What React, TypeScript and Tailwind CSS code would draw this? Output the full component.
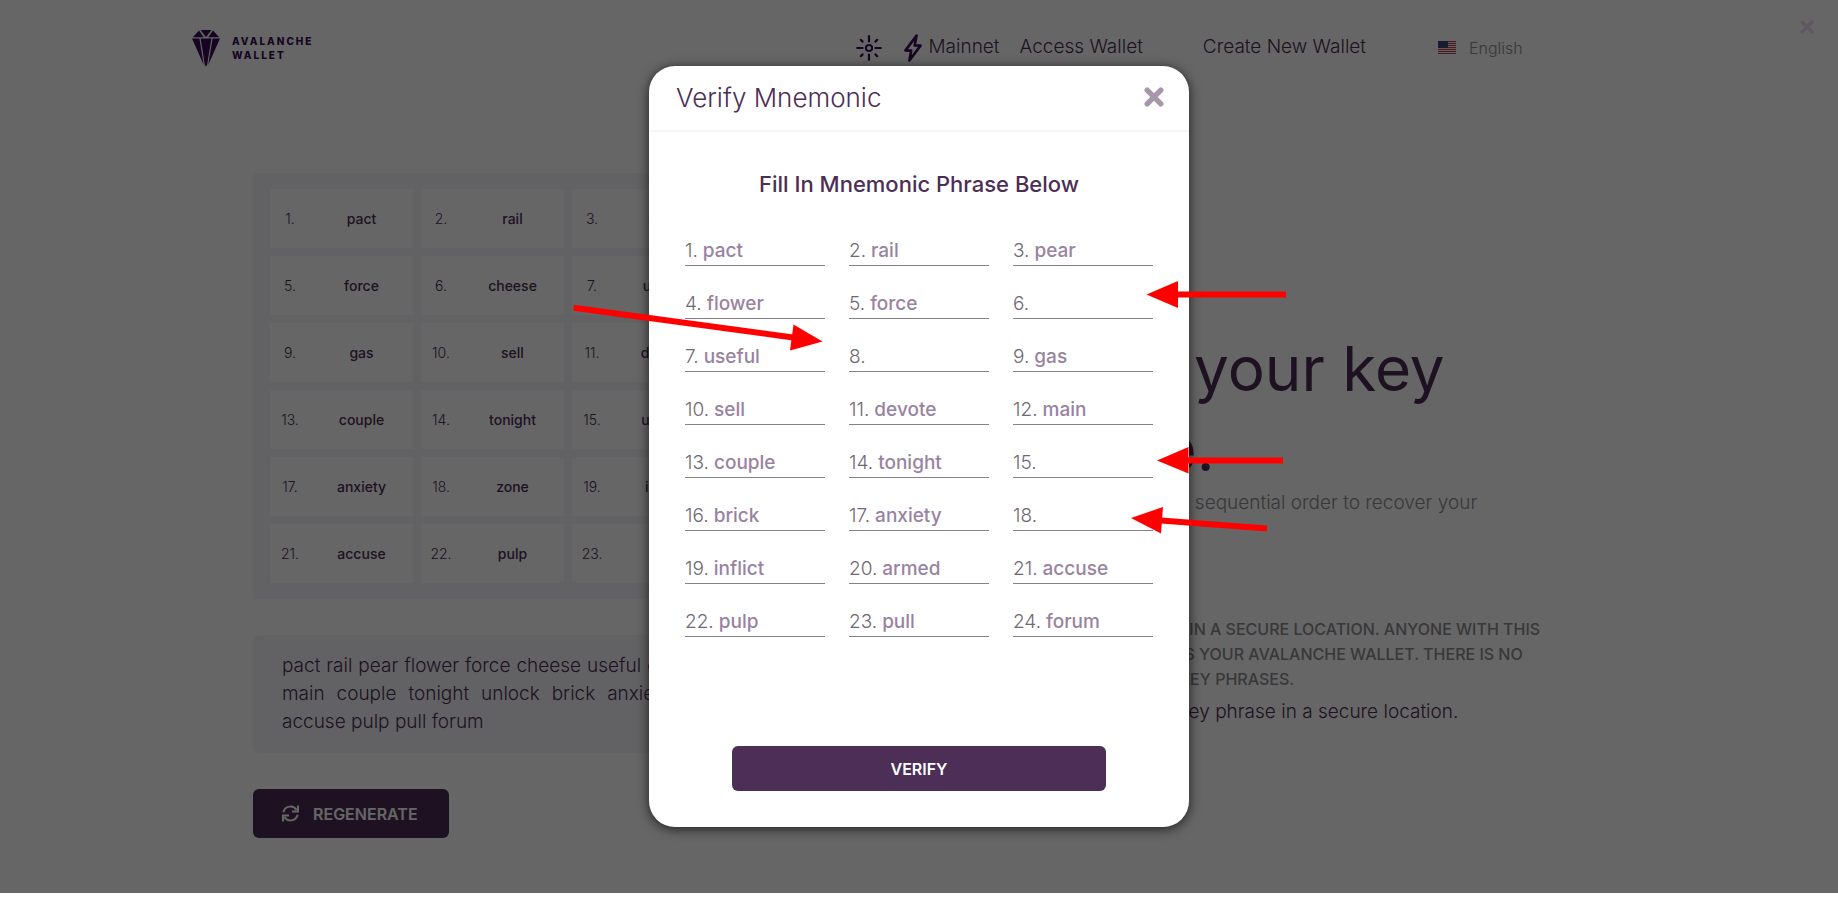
import React from "react";

const words = [
  "pact", "rail", "pear", "flower", "force", "cheese", "useful", "country",
  "gas", "sell", "devote", "main", "couple", "tonight", "unlock", "brick",
  "anxiety", "zone", "inflict", "armed", "accuse", "pulp", "pull", "forum",
];

const hidden = [6, 8, 15, 18];

function Cross({ className }: { className: string }) {
  return (
    <svg viewBox="0 0 20 20" className={className} aria-hidden="true">
      <path d="M3.2 3.2 16.8 16.8M16.8 3.2 3.2 16.8" stroke="currentColor" strokeWidth="5.4" strokeLinecap="round" />
    </svg>
  );
}

function Gem() {
  return (
    <svg viewBox="0 0 28 36" className="h-9 w-7 text-[#370b55]" fill="currentColor" aria-hidden="true">
      <path d="M7 0.6 11.8 7.2H0.8ZM8.6 0H19.4L14 7.2ZM21 0.6 27.2 7.2H16.2Z" />
      <path d="M0 8.6H7.4L11.8 35ZM8.6 8.6H19.4L15 35.5 13.9 36 13 35.5ZM20.6 8.6H28L16.2 35Z" />
    </svg>
  );
}

function Flag() {
  return (
    <svg viewBox="0 0 18 13" className="h-[13px] w-[18px]" aria-hidden="true">
      <rect width="18" height="13" fill="#eee" />
      {[0, 2, 4, 6, 8, 10, 12].map((y) => (
        <rect key={y} y={y} width="18" height="1" fill="#c8414b" />
      ))}
      <rect width="10" height="7" fill="#3c4678" />
    </svg>
  );
}

function Header() {
  return (
    <header className="mx-auto flex h-24 w-full max-w-[1454px] items-center pb-px text-[19px] font-light text-[#4c2e56]">
      <a href="#" className="flex items-center gap-3">
        <Gem />
        <span className="text-[10px] leading-[14px] font-extrabold tracking-[2px] text-[#370b55]">
          AVALANCHE
          <br />
          WALLET
        </span>
      </a>
      <nav className="ml-auto flex items-center pr-[123px]">
        <button aria-label="Toggle theme" className="mr-[22px] text-[#370b55]">
          <svg viewBox="0 0 26 26" className="size-[26px]" fill="none" stroke="currentColor" strokeWidth="2.2" strokeLinecap="round" aria-hidden="true">
            <circle cx="13" cy="13" r="3.1" strokeWidth="2" />
            <path d="M13 1.2V6.5M13 19.5V24.8M1.2 13H6.5M19.5 13H24.8M4.8 4.8 6.6 6.6M19.4 19.4 21.2 21.2M21.2 4.8 19.4 6.6M6.6 19.4 4.8 21.2" />
          </svg>
        </button>
        <button className="mr-5 flex items-center gap-[7px]">
          <svg viewBox="0 0 18 28" className="h-7 w-[18px] text-[#370b55]" fill="none" stroke="currentColor" strokeWidth="2.6" strokeLinejoin="round" aria-hidden="true">
            <path d="M12.6 1.5 1.5 16.4 7.2 16.6 5.4 26.5 16.5 11.6 10.6 11.4Z" />
          </svg>
          Mainnet
        </button>
        <a href="#access" className="mr-[60px]">Access Wallet</a>
        <a href="#create" className="mr-[72px]">Create New Wallet</a>
        <label className="flex items-center gap-[13px] text-[16px] text-[#8c8c92]">
          <Flag />
          <select aria-label="Language" className="appearance-none bg-transparent">
            <option>English</option>
          </select>
        </label>
      </nav>
    </header>
  );
}

function KeyPhrase() {
  return (
    <section className="w-[630px] shrink-0">
      <ol className="grid grid-cols-4 gap-2 bg-[#f5f6fa] px-[17px] py-4 text-[14px] text-[#4c2e56]">
        {words.map((word, i) => (
          <li key={word} className="grid h-[59px] grid-cols-[40px_1fr] items-center bg-white text-center">
            <span className="font-light">{i + 1}.</span>
            <span className="font-medium">{word}</span>
          </li>
        ))}
      </ol>
      <p className="mt-9 rounded-md bg-[#f5f6fa] px-[29px] py-[17px] text-justify text-[19px] leading-7 font-light text-[#4c2e56]">
        {words.join(" ")}
      </p>
      <button className="mt-9 flex h-[49px] w-[196px] items-center gap-[14px] rounded-md bg-[#4c2e56] pl-[29px] text-[16px] font-semibold text-white">
        <svg viewBox="0 0 17 17" className="size-[17px]" fill="none" stroke="currentColor" strokeWidth="2" aria-hidden="true">
          <path d="M1.4 7.2A7.2 7.2 0 0 1 14.6 5M15.6 9.8A7.2 7.2 0 0 1 2.4 12" />
          <path d="M16 0.4V6.6H10M1 16.6V10.4H7" />
        </svg>
        REGENERATE
      </button>
    </section>
  );
}

function Notes() {
  return (
    <section className="flex-1 pt-[156px] pl-[104px] text-[#4c2e56]">
      <h1 className="text-[62px] leading-[80px]">
        This is your key
        <span className="block pl-2">phrase.</span>
      </h1>
      <p className="text-[19px] leading-7 font-light text-[#8c8c92]">
        Use these words in the sequential order to recover your
        <br />
        wallet.
      </p>
      <p className="mt-[72px] text-[16px] leading-[25px] font-medium whitespace-nowrap text-[#8c8c92]">
        STORE THIS KEY PHRASE IN A SECURE LOCATION. ANYONE WITH THIS
        <br />
        KEY PHRASE CAN ACCESS YOUR AVALANCHE WALLET. THERE IS NO
        <br />
        WAY TO RECOVER LOST KEY PHRASES.
      </p>
      <label className="mt-[6px] flex items-center gap-5 text-[19px] leading-7 font-light whitespace-nowrap">
        <input type="checkbox" defaultChecked className="size-5" />
        I wrote down my key phrase in a secure location.
      </label>
    </section>
  );
}

function VerifyDialog() {
  return (
    <div role="dialog" aria-labelledby="verify-title" className="w-[540px] rounded-[26px] bg-white text-[#4c2e56] shadow-[0_2px_12px_rgba(0,0,0,0.7)]">
      <div className="flex h-[66px] items-center justify-between border-b-2 border-[#f5f6fa] pr-[25px] pb-0.5 pl-[27px]">
        <h2 id="verify-title" className="text-[26px] font-light">Verify Mnemonic</h2>
        <button aria-label="Close dialog" className="text-[#a697ab]">
          <Cross className="size-5" />
        </button>
      </div>
      <form className="px-9 pt-9 pb-9" onSubmit={(e) => e.preventDefault()}>
        <h3 className="text-center text-[22px] leading-8 font-medium">Fill In Mnemonic Phrase Below</h3>
        <div className="mt-[33px] grid grid-cols-3 gap-x-6 gap-y-5 text-[19px]">
          {words.map((word, i) => (
            <label key={word} className="flex h-[33px] items-baseline gap-[5px] border-b border-[#87808b] pt-1 leading-7">
              <span className="font-light text-[#6f6875]">{i + 1}.</span>
              <input
                defaultValue={hidden.includes(i + 1) ? "" : word}
                className="w-0 min-w-0 flex-1 bg-transparent font-medium text-[#9883a1] outline-none"
              />
            </label>
          ))}
        </div>
        <button className="mx-auto mt-[109px] block h-[45px] w-[374px] rounded-md bg-[#4c2e56] text-[16px] font-semibold text-white">
          VERIFY
        </button>
      </form>
    </div>
  );
}

function Arrows() {
  return (
    <svg viewBox="0 0 1838 915" className="pointer-events-none absolute top-0 left-0 h-[915px] w-[1838px]" fill="#f00" stroke="#f00" aria-hidden="true">
      <path d="M1177 294.5H1286M1188 460.5H1283M1161 520.5 1267 528.5M793 337.5 573.5 307.8" strokeWidth="6" />
      <path d="M1146.5 294.5 1178 281V308ZM1157 460.5 1188.5 447V473.5ZM1131 518 1163 507 1161 533.5ZM822.5 341.5 793.5 324.5 790 350.5Z" stroke="none" />
    </svg>
  );
}

export default function App() {
  return (
    <div className="relative flex min-h-screen flex-col overflow-hidden bg-white font-[Inter,sans-serif]">
      <div className="relative flex-1">
        <Header />
        <main className="mx-auto flex max-w-[1332px] pt-[77px] pb-[55px]">
          <KeyPhrase />
          <Notes />
        </main>
        <button aria-label="Close" className="absolute top-5 right-6 text-[#f0dcf6]">
          <Cross className="size-[14px]" />
        </button>
        <div className="absolute inset-0 flex items-center justify-center bg-black/60">
          <VerifyDialog />
        </div>
      </div>
      <div className="h-[22px]" />
      <Arrows />
    </div>
  );
}
